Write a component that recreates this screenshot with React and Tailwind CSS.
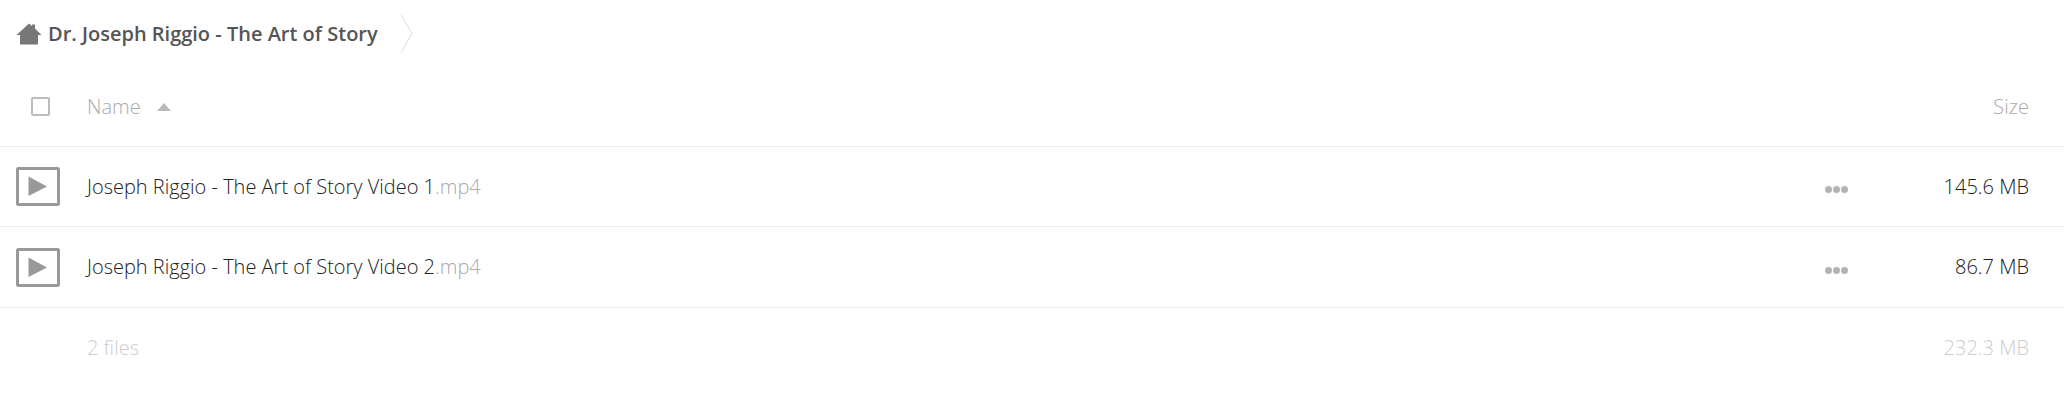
import React from 'react';

const files = [
  { name: 'Joseph Riggio - The Art of Story Video 1', ext: '.mp4', size: '145.6 MB', height: 'h-[80px]' },
  { name: 'Joseph Riggio - The Art of Story Video 2', ext: '.mp4', size: '86.7 MB', height: 'h-[81px]' },
];

function HomeIcon() {
  return (
    <svg width="26" height="22" viewBox="0 0 26 22" className="shrink-0">
      <path d="M0.5 12 L13 0.5 L16 3 L16 1.5 L19 1.5 L19 5.5 L25.5 12 L22 12 L22 21.5 L4 21.5 L4 12 Z" fill="#777" />
    </svg>
  );
}

function VideoIcon() {
  return (
    <svg width="44" height="39" viewBox="0 0 44 39" className="shrink-0">
      <rect x="1.5" y="1.5" width="41" height="36" rx="1" fill="#fff" stroke="#999" strokeWidth="3" />
      <path d="M12.5 9.5 L31 19.5 L12.5 29 Z" fill="#999" />
    </svg>
  );
}

function Dots() {
  return (
    <div className="flex w-[23px] gap-[1px] mt-[6px]">
      <span className="w-[7px] h-[7px] rounded-full bg-[#b3b3b3]" />
      <span className="w-[7px] h-[7px] rounded-full bg-[#b3b3b3]" />
      <span className="w-[7px] h-[7px] rounded-full bg-[#b3b3b3]" />
    </div>
  );
}

export default function App() {
  return (
    <div className="w-[2064px] h-[405px] bg-white overflow-hidden font-['Open_Sans',sans-serif] font-light text-[20px]">
      {/* Breadcrumb */}
      <div className="flex items-center h-[67px] pl-[16px]">
        <HomeIcon />
        <span className="ml-[6px] font-semibold text-[#555] text-[20px]">Dr. Joseph Riggio - The Art of Story</span>
        <svg width="14" height="40" viewBox="0 0 14 40" className="ml-[22px]">
          <path d="M1 1 L12 19.5 L1 39" fill="none" stroke="#ddd" strokeWidth="1" />
        </svg>
      </div>

      {/* Header */}
      <div className="flex items-center h-[80px] border-b border-[#eee] pr-[35px]">
        <div className="w-[87px] pl-[31px]">
          <div className="w-[19px] h-[19px] border-2 border-[#bbb] rounded-[2px]" />
        </div>
        <span className="text-[#aaa]">Name</span>
        <svg width="14" height="8" viewBox="0 0 14 8" className="ml-[16px]">
          <path d="M7 0 L14 8 L0 8 Z" fill="#bbb" />
        </svg>
        <span className="ml-auto text-[#aaa]">Size</span>
      </div>

      {/* Files */}
      {files.map((file) => (
        <div key={file.name} className={`flex items-center border-b border-[#eee] pr-[35px] ${file.height}`}>
          <div className="w-[87px] pl-[16px]">
            <VideoIcon />
          </div>
          <span className="text-[#222]">
            {file.name}
            <span className="text-[#aaa]">{file.ext}</span>
          </span>
          <div className="ml-auto flex items-center">
            <Dots />
            <span className="w-[181px] text-right text-[#222]">{file.size}</span>
          </div>
        </div>
      ))}

      {/* Summary */}
      <div className="flex items-center h-[80px] pl-[87px] pr-[35px] text-[#ccc]">
        <span>2 files</span>
        <span className="ml-auto">232.3 MB</span>
      </div>
    </div>
  );
}
